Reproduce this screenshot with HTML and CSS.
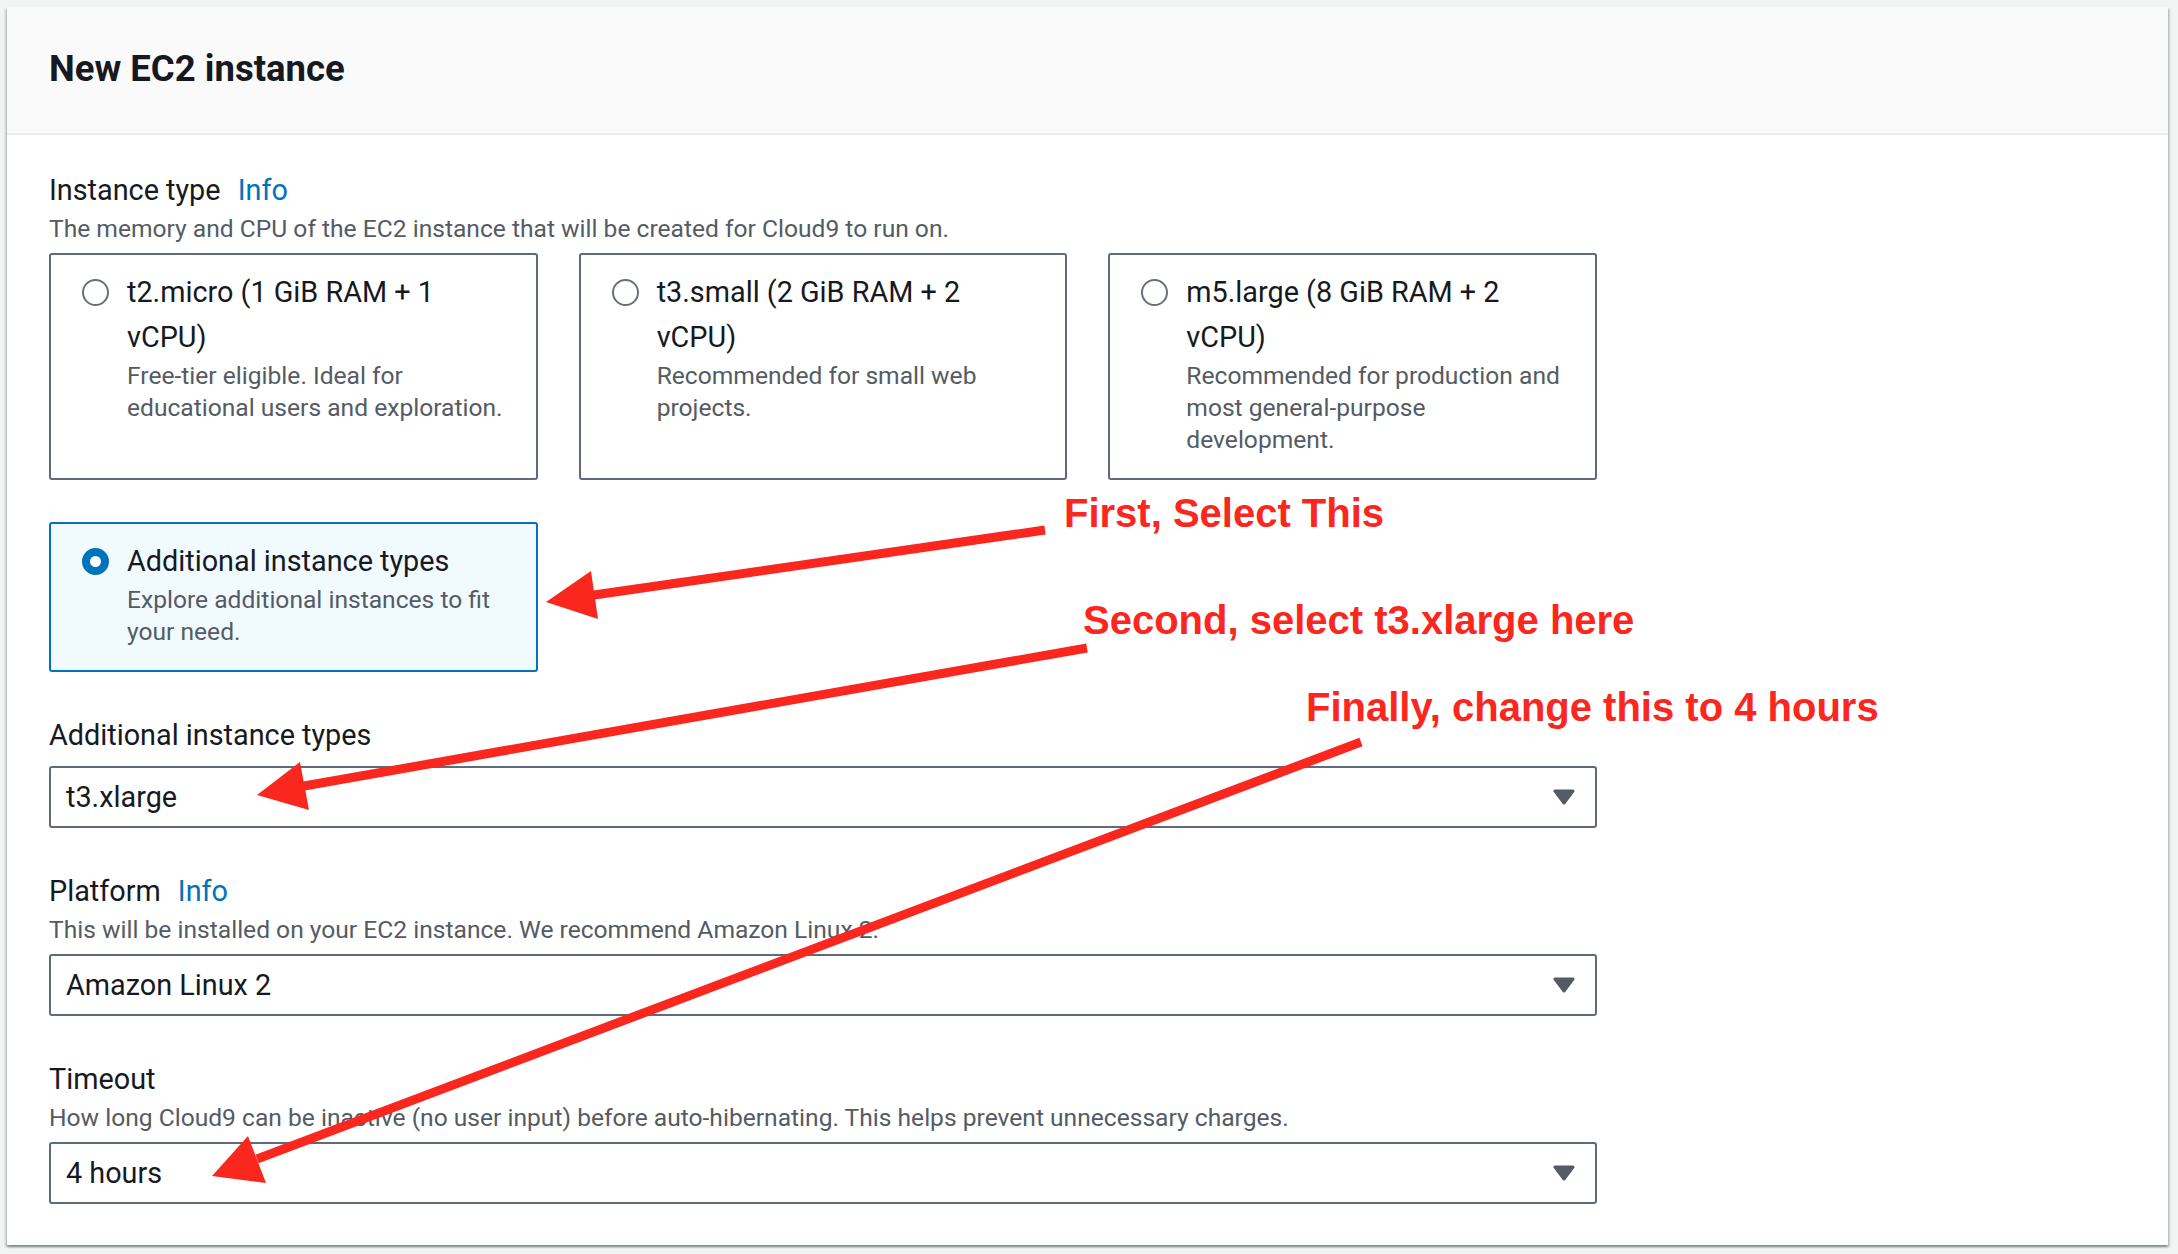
FILE: index.html
```html
<!DOCTYPE html>
<html lang="en">
<head>
<meta charset="utf-8">
<title>New EC2 instance</title>
<link rel="stylesheet" href="styles.css">
</head>
<body>
<div class="container">
  <div class="header">
    <h2 class="title">New EC2 instance</h2>
  </div>
  <div class="content">
    <div class="field">
      <div class="label">Instance type <a class="info">Info</a></div>
      <div class="desc">The memory and CPU of the EC2 instance that will be created for Cloud9 to run on.</div>
      <div class="tiles">
        <div class="tile">
          <span class="radio"></span>
          <div class="tile-text">
            <div class="tile-title">t2.micro (1 GiB RAM + 1 vCPU)</div>
            <div class="tile-desc">Free-tier eligible. Ideal for educational users and exploration.</div>
          </div>
        </div>
        <div class="tile">
          <span class="radio"></span>
          <div class="tile-text">
            <div class="tile-title">t3.small (2 GiB RAM + 2 vCPU)</div>
            <div class="tile-desc">Recommended for small web projects.</div>
          </div>
        </div>
        <div class="tile">
          <span class="radio"></span>
          <div class="tile-text">
            <div class="tile-title">m5.large (8 GiB RAM + 2 vCPU)</div>
            <div class="tile-desc">Recommended for production and most general-purpose development.</div>
          </div>
        </div>
        <div class="tile tile-selected">
          <span class="radio radio-checked"></span>
          <div class="tile-text">
            <div class="tile-title">Additional instance types</div>
            <div class="tile-desc">Explore additional instances to fit your need.</div>
          </div>
        </div>
      </div>
    </div>

    <div class="field">
      <div class="label">Additional instance types</div>
      <div class="select">
        <span>t3.xlarge</span>
        <svg class="caret" width="22" height="16" viewBox="0 0 22 16"><path d="M2 2 H20 L11 14 Z" fill="#545b64" stroke="#545b64" stroke-width="3" stroke-linejoin="round"/></svg>
      </div>
    </div>

    <div class="field">
      <div class="label">Platform <a class="info">Info</a></div>
      <div class="desc">This will be installed on your EC2 instance. We recommend Amazon Linux 2.</div>
      <div class="select">
        <span>Amazon Linux 2</span>
        <svg class="caret" width="22" height="16" viewBox="0 0 22 16"><path d="M2 2 H20 L11 14 Z" fill="#545b64" stroke="#545b64" stroke-width="3" stroke-linejoin="round"/></svg>
      </div>
    </div>

    <div class="field">
      <div class="label">Timeout</div>
      <div class="desc">How long Cloud9 can be inactive (no user input) before auto-hibernating. This helps prevent unnecessary charges.</div>
      <div class="select">
        <span>4 hours</span>
        <svg class="caret" width="22" height="16" viewBox="0 0 22 16"><path d="M2 2 H20 L11 14 Z" fill="#545b64" stroke="#545b64" stroke-width="3" stroke-linejoin="round"/></svg>
      </div>
    </div>
  </div>
</div>

<svg class="annotations" width="2178" height="1254" viewBox="0 0 2178 1254">
  <g class="note-text">
    <text x="1064" y="527">First, Select This</text>
    <text x="1083" y="634">Second, select t3.xlarge here</text>
    <text x="1306" y="721">Finally, change this to 4 hours</text>
  </g>
  <g fill="#f9271e" stroke="#f9271e">
    <line x1="1045" y1="530" x2="594" y2="595" stroke-width="9"/>
    <polygon points="546,602 591,571 598,619" stroke="none"/>
    <line x1="1087" y1="648" x2="304" y2="786" stroke-width="9"/>
    <polygon points="257,795 300,762 309,810" stroke="none"/>
    <line x1="1361" y1="742" x2="257" y2="1159" stroke-width="9"/>
    <polygon points="212,1176 248,1136 266,1183" stroke="none"/>
  </g>
</svg>
</body>
</html>
```

FILE: styles.css
```css
html, body {
  margin: 0;
  padding: 0;
}

body {
  background: #f2f3f3;
  padding: 7px 10px 10px 7px;
  font-family: Roboto, "Open Sans", "Liberation Sans", sans-serif;
  color: #16191f;
  position: relative;
  box-sizing: border-box;
  width: 2178px;
  height: 1254px;
  overflow: hidden;
}

.container {
  background: #ffffff;
  box-shadow: 0 2px 2px 0 rgba(0, 28, 36, 0.3), 2px 2px 2px 0 rgba(0, 28, 36, 0.15), -2px 2px 2px 0 rgba(0, 28, 36, 0.15);
}

.header {
  background: #fafafa;
  border-bottom: 2px solid #eaeded;
  padding: 40px 42px 42px;
}

.title {
  margin: 0;
  font-size: 36.5px;
  line-height: 44px;
  font-weight: 700;
  color: #16191f;
}

.content {
  padding: 33px 42px 41px;
  max-width: 1548px;
  display: flex;
  flex-direction: column;
  gap: 41px;
}

.label {
  font-size: 28.8px;
  line-height: 45px;
  color: #16191f;
}

.info {
  color: #0073bb;
  margin-left: 10px;
  text-decoration: none;
}

.desc {
  font-size: 24.6px;
  line-height: 32px;
  color: #545b64;
}

.tiles {
  margin-top: 8px;
  display: grid;
  grid-template-columns: repeat(3, 1fr);
  column-gap: 41px;
  row-gap: 42px;
}

.tile {
  display: flex;
  align-items: flex-start;
  gap: 18px;
  border: 2px solid #5f6b7a;
  border-radius: 3px;
  padding: 15px 28px 22px 31px;
  background: #ffffff;
}

.tile-selected {
  border-color: #0073bb;
  background: #f1faff;
}

.radio {
  flex: 0 0 auto;
  width: 27px;
  height: 27px;
  margin-top: 9px;
  box-sizing: border-box;
  border: 2px solid #687078;
  border-radius: 50%;
  background: #ffffff;
}

.radio-checked {
  border: 8px solid #0073bb;
  background: #ffffff;
}

.tile-text {
  flex: 1 1 auto;
  min-width: 0;
}

.tile-title {
  font-size: 28.8px;
  line-height: 45px;
  color: #16191f;
}

.tile-desc {
  font-size: 24.6px;
  line-height: 32px;
  color: #545b64;
}

.select {
  margin-top: 8px;
  height: 62px;
  box-sizing: border-box;
  border: 2px solid #5f6b7a;
  border-radius: 3px;
  padding: 0 20px 0 15px;
  display: flex;
  align-items: center;
  justify-content: space-between;
  font-size: 28.8px;
  color: #16191f;
  background: #ffffff;
}

.caret {
  display: block;
}

.annotations {
  position: absolute;
  left: 0;
  top: 0;
  pointer-events: none;
}

.note-text {
  font-family: "Liberation Sans", Arial, sans-serif;
  font-weight: 700;
  font-size: 40px;
  fill: #f9271e;
}
```
